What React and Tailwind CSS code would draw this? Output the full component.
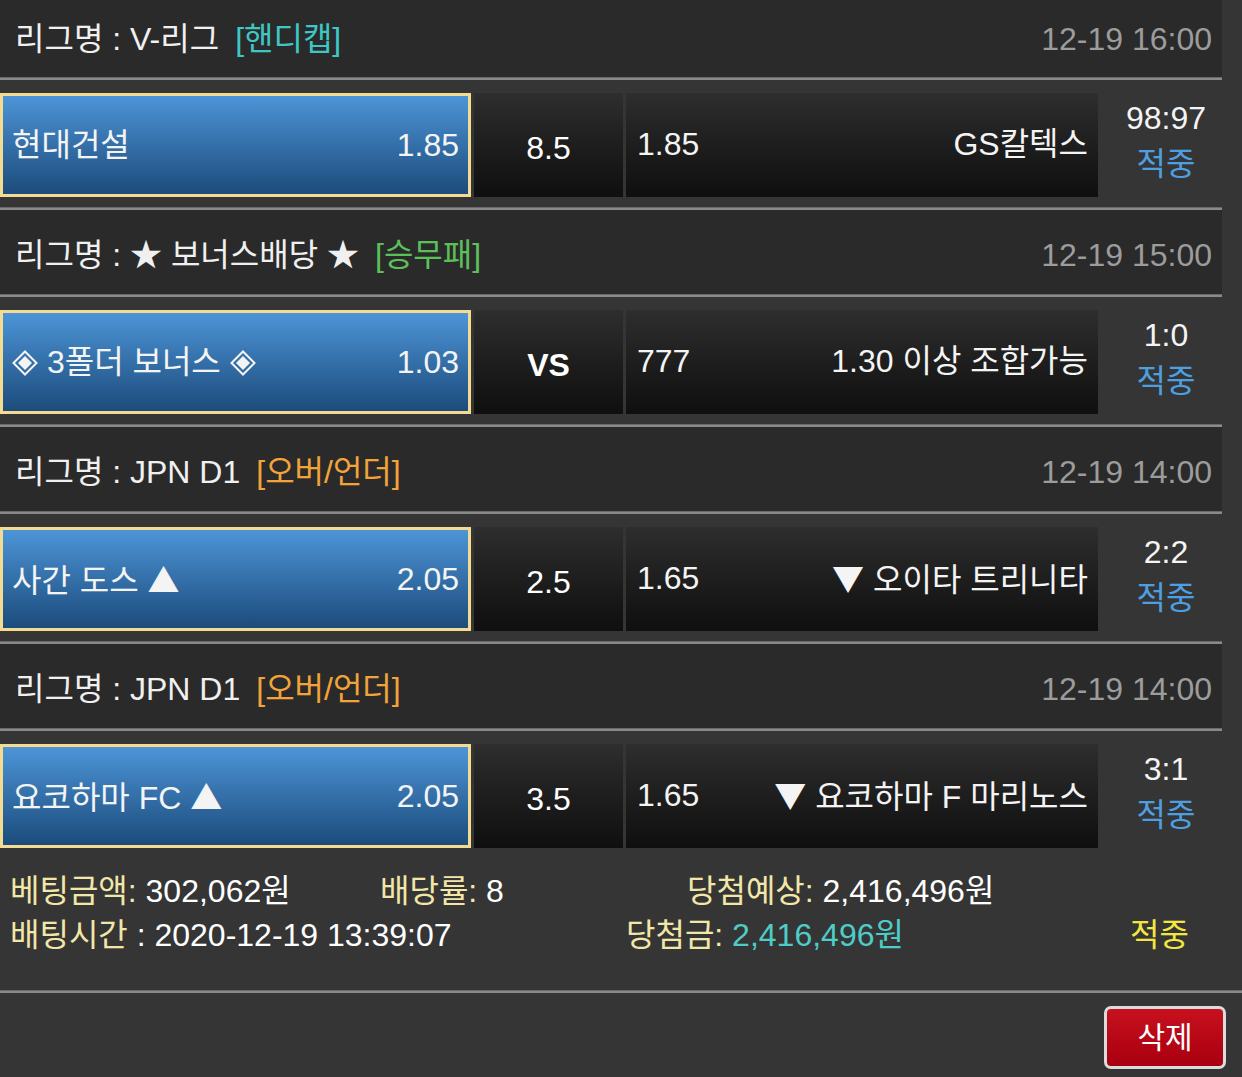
import React from "react";

const Tri = ({ c }) => <span className="font-['Noto_Sans_CJK_KR']">{c}</span>;
const Dia = () => (
  <svg width="26" height="26" viewBox="0 0 26 26" className="inline-block align-[-3px]">
    <path d="M13 1.5 L24.5 13 L13 24.5 L1.5 13 Z" fill="none" stroke="#f4f4f4" strokeWidth="2" />
    <path d="M13 6 L20 13 L13 20 L6 13 Z" fill="#f4f4f4" />
  </svg>
);

const games = [
  {
    league: "V-리그",
    tag: "[핸디캡]",
    tagColor: "text-[#3ec8c4]",
    date: "12-19 16:00",
    home: "현대건설",
    homeOdds: "1.85",
    mid: "8.5",
    awayOdds: "1.85",
    away: "GS칼텍스",
    score: "98:97",
  },
  {
    league: "★ 보너스배당 ★",
    tag: "[승무패]",
    tagColor: "text-[#5cc05a]",
    date: "12-19 15:00",
    home: (
      <>
        <Dia /> 3폴더 보너스 <Dia />
      </>
    ),
    homeOdds: "1.03",
    mid: "VS",
    bold: true,
    awayOdds: "777",
    away: "1.30 이상 조합가능",
    score: "1:0",
  },
  {
    league: "JPN D1",
    tag: "[오버/언더]",
    tagColor: "text-[#f2a33a]",
    date: "12-19 14:00",
    home: (
      <>
        사간 도스 <Tri c="▲" />
      </>
    ),
    homeOdds: "2.05",
    mid: "2.5",
    awayOdds: "1.65",
    away: (
      <>
        <Tri c="▼" /> 오이타 트리니타
      </>
    ),
    score: "2:2",
  },
  {
    league: "JPN D1",
    tag: "[오버/언더]",
    tagColor: "text-[#f2a33a]",
    date: "12-19 14:00",
    home: (
      <>
        요코하마 FC <Tri c="▲" />
      </>
    ),
    homeOdds: "2.05",
    mid: "3.5",
    awayOdds: "1.65",
    away: (
      <>
        <Tri c="▼" /> 요코하마 F 마리노스
      </>
    ),
    score: "3:1",
  },
];

function Game({ g, first, last }) {
  return (
    <div className="w-[1222px]">
      <div
        className={`flex items-center justify-between bg-[#2a2a2a] pl-[15px] pr-[10px] ${
          first ? "h-[77px]" : "h-[84px] pt-[6px]"
        }`}
      >
        <div className="flex items-center text-[#f0f0f0]">
          <span>리그명 : {g.league}</span>
          <span className={`ml-[16px] ${g.tagColor}`}>{g.tag}</span>
        </div>
        <span className="text-[#9c9c9c]">{g.date}</span>
      </div>
      <div className="h-[3px] bg-[#8a8a8a] border-t border-[#6a6a6a]" />
      <div className={`flex pt-[13px] ${last ? "pb-0" : "pb-[10px]"}`}>
        <div className="flex h-[104px] w-[471px] shrink-0 items-center justify-between border-[3px] border-[#f3dc92] bg-gradient-to-b from-[#4d95d8] to-[#1c4c7c] pl-[9px] pr-[9px] text-[#f4f4f4]">
          <span className="whitespace-nowrap">{g.home}</span>
          <span>{g.homeOdds}</span>
        </div>
        <div
          className={`ml-[3px] flex h-[104px] w-[149px] shrink-0 items-center justify-center bg-gradient-to-b from-[#2e2e2e] to-[#0f0f0f] pt-[6px] text-white ${
            g.bold ? "font-bold" : ""
          }`}
        >
          {g.mid}
        </div>
        <div className="ml-[3px] flex h-[104px] w-[472px] shrink-0 items-center justify-between bg-gradient-to-b from-[#2e2e2e] to-[#0f0f0f] pl-[11px] pr-[10px] pb-[2px] text-[#f4f4f4]">
          <span>{g.awayOdds}</span>
          <span className="whitespace-nowrap">{g.away}</span>
        </div>
        <div className="flex w-[124px] shrink-0 flex-col items-center pl-[12px] pt-[2px] leading-[46px]">
          <span className="text-[#f4f4f4]">{g.score}</span>
          <span className="text-[#4e9fe0]">적중</span>
        </div>
      </div>
      {!last && <div className="h-[3px] bg-[#8a8a8a] border-t border-[#6a6a6a]" />}
    </div>
  );
}

export default function App() {
  return (
    <div
      className="h-[1077px] w-[1242px] overflow-hidden bg-[#353535] text-[32px] leading-none"
      style={{ fontFamily: "'Liberation Sans', 'Noto Sans CJK KR', sans-serif" }}
    >
      {games.map((g, i) => (
        <Game key={i} g={g} first={i === 0} last={i === games.length - 1} />
      ))}
      <div className="flex h-[142px] flex-col pl-[10px] pt-[27px] gap-[12px]">
        <div className="flex items-center">
          <span className="w-[370px] whitespace-nowrap">
            <span className="text-[#f2e7a8]">베팅금액: </span>
            <span className="text-white">302,062원</span>
          </span>
          <span className="w-[307px] whitespace-nowrap">
            <span className="text-[#f2e7a8]">배당률: </span>
            <span className="text-white">8</span>
          </span>
          <span className="whitespace-nowrap">
            <span className="text-[#f2e7a8]">당첨예상: </span>
            <span className="text-white">2,416,496원</span>
          </span>
        </div>
        <div className="flex items-center">
          <span className="w-[616px] whitespace-nowrap">
            <span className="text-[#f2e7a8]">배팅시간</span>
            <span className="text-white"> : 2020-12-19 13:39:07</span>
          </span>
          <span className="w-[504px] whitespace-nowrap">
            <span className="text-[#f2e7a8]">당첨금: </span>
            <span className="text-[#4ecdc8]">2,416,496원</span>
          </span>
          <span className="text-[#f4e640]">적중</span>
        </div>
      </div>
      <div className="h-[3px] bg-[#8a8a8a] border-t border-[#6a6a6a]" />
      <div className="flex justify-end pr-[16px] pt-[13px]">
        <button className="flex h-[63px] w-[122px] items-center justify-center rounded-[7px] border-[3px] border-[#dcdcdc] bg-gradient-to-b from-[#c8101e] to-[#a8000f] text-[30px] text-white">
          삭제
        </button>
      </div>
    </div>
  );
}
